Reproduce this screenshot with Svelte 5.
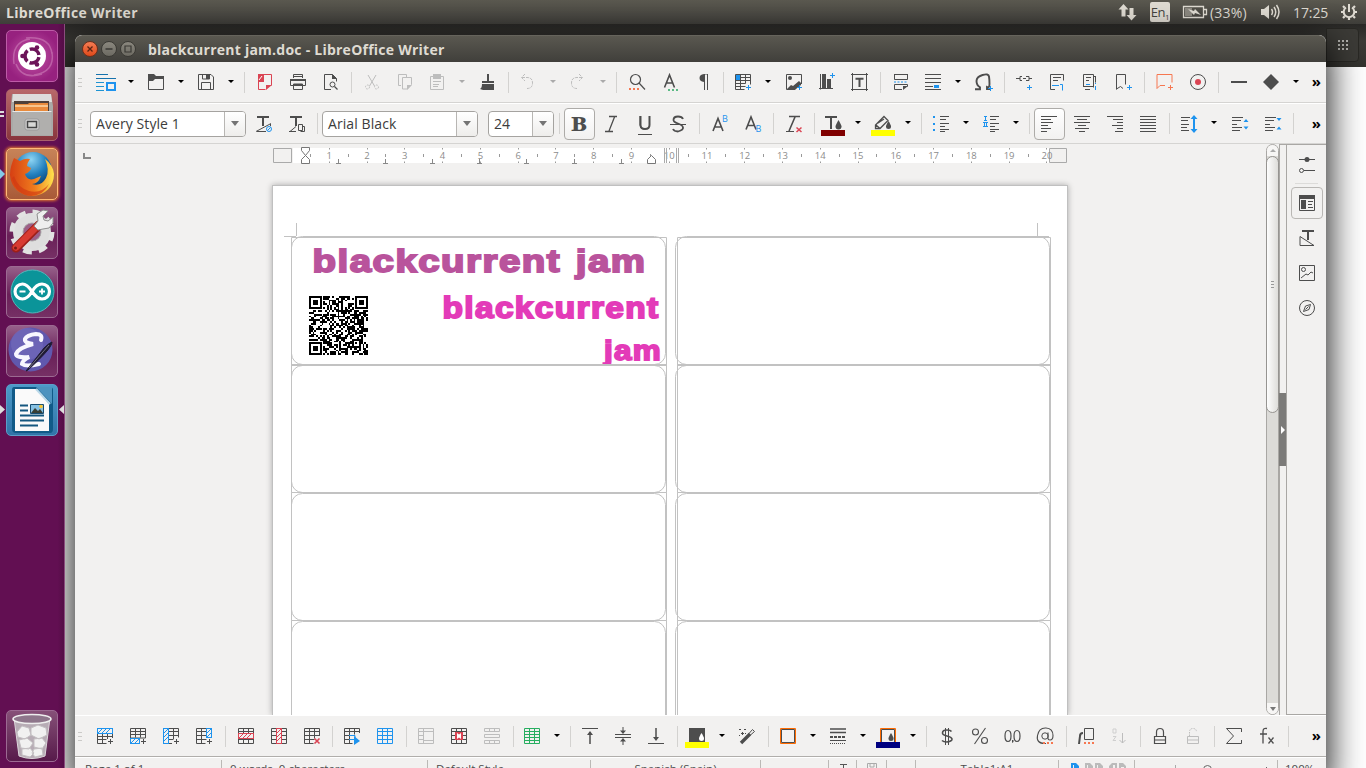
<script>
  const K = '#4d4d4d', B = '#1e93ee', R = '#da4453', O = '#f67750', G = '#bdbdbd', GR = '#27ae60';
  const s = (d, c = K, w = 1) => `<path d="${d}" fill="none" stroke="${c}" stroke-width="${w}"/>`;
  const f = (d, c = K) => `<path d="${d}" fill="${c}"/>`;
  const t = (x, y, size, str, c = K, extra = '') =>
    `<text x="${x}" y="${y}" font-size="${size}" fill="${c}" font-family="Open Sans, sans-serif" ${extra}>${str}</text>`;
  const plus = (x, y, c = B) => s(`M${x - 2.5} ${y}h5M${x} ${y - 2.5}v5`, c);
  const grid = (c = K) => s('M.5 .5h15v15h-15zM.5 3.5h15M.5 7.5h15M.5 11.5h15M5.5 .5v15M10.500 .5v15', c);
  const dots = (x, y, c = O) => f(`M${x} ${y}h2v2h-2zM${x + 4} ${y}h2v2h-2zM${x + 8} ${y}h2v2h-2z`, c);
  const hatch = (x, y, w, h, c) => {
    const out = `<rect x="${x}" y="${y}" width="${w}" height="${h}" fill="#f2f1f0" stroke="${c}"/>`;
    const n = Math.min(w, h);
    let d = '';
    if (w > h) for (let i = 0; i + n <= w; i += 4) d += `M${x + i} ${y + h}l${n} ${-n}`;
    else for (let i = 0; i + n <= h; i += 4) d += `M${x} ${y + n + i}l${n} ${-n}`;
    return out + s(d, c);
  };

  const icons = {
    new: s('M-2 .5h12M-2 4.5h20', '#1572ad') + s('M-2 8.5h8M-2 12.5h8M-2 16.5h8', '#1e93d2') + s('M9 9h8v7h-8z', B, 2),
    open: f('M0 0h6l2 2h8v3h-9l-2 2h-5z') + s('M.5 2v13.5h15v-13'),
    save: s('M.5 .5h12.5l2.5 2.5v12.5h-15zM3.5 15v-6.5h9v6.5M4.5 .5v4.500h7v-4.500') + f('M8 1h3v4h-3z'),
    pdf: s('M2.500 8v7.500h7M7 .5h8.500v11', R) + f('M2 0h6v8h-6zM10 16v-5h6z', R) + s('M3 6l3-4', '#fff'),
    print: s('M3.500 4v-3.500h9v3.500M3 2.500h10M.5 11.500v-6h15v6h-3M.5 11.500h3M3.500 10v5.500h9v-5.500z') + f('M0 5h16v2h-16zM4 10h8v2h-8z'),
    preview: s('M8 15.500h-6.500v-15h8l4 4v3') + f('M9 0v5h5z') + `<circle cx="9.500" cy="10.500" r="2.500" fill="none" stroke="${K}"/>` + s('M11.500 12.500l3 3', K, 1.300),
    cut: s('M4 1l6.500 11M12 1l-6.500 11', G) + `<g fill="none" stroke="${G}" stroke-dasharray="1.500 1.200"><circle cx="3.500" cy="13" r="2"/><circle cx="12.500" cy="13" r="2"/></g>`,
    copy: s('M4 11.500h-2.500v-11h8v3M5.500 3.500h9v7l-4 4.500h-5z', G) + f('M10 16v-5h5z', G),
    paste: s('M1.500 2.500h13v13h-13zM4 7.500h8M4 10.500h6M4 12.500h5', G) + f('M4 0h8v5h-8z', G),
    brush: f('M8 0h2v7h5v2h-12v-2h5zM3 10h12v6h-11l-3-1q2-1 2-5z'),
    undo: s('M5 0l-3.500 3.500 3.500 3.500M2 3.500h5q5.500 0 5.500 5.500t-5.500 5.500', G).replace('/>', ' stroke-dasharray="3 1"/>'),
    redo: s('M9 0l3.500 3.500-3.500 3.500M12 3.500h-5q-5.500 0-5.500 5.500t5.500 5.500', G).replace('/>', ' stroke-dasharray="3 1"/>'),
    find: `<circle cx="6.500" cy="5.500" r="5" fill="none" stroke="${K}" stroke-width="1.200"/>` + s('M10 9l6 6.500', K, 1.200) + dots(0, 14),
    spell: s('M2.500 13.500l5-12.500 5 12.500M4.500 9h6.500', K, 1.600) + dots(6, 15, '#5cba85'),
    pilcrow: f('M12 0h-3q-4.500 .5-4.500 4t4.500 4v8h1v-15.500h2v15.500h1v-16z'),
    table: s('M.5 .5h15v10M.5 .5v15h9M.5 6.500h15M.5 9.500h10M.5 12.500h10M5.500 .5v15M10.500 .5v9M5 3.500h10') + f('M1 1h4v5h-4z', B) + plus(13.500, 13.500),
    image: s('M15.500 10v-9.500h-15v15h9') + `<circle cx="4" cy="4" r="2" fill="${K}"/>` + f('M1 15l4-4 2 1 6-5 2 2v2l-5 4z') + plus(13.500, 13.500),
    chart: s('M2.500 0v15.500M1 14.500h14') + f('M4 0h4v14h-4zM9 5h4v9h-4z') + plus(14.500, 1.500),
    textbox: s('M1.500 -1v18M15.500 -1v18M0 .5h17M0 15.500h17', K) + s('M4.500 4.800h8M8.500 4v9', K, 2),
    pagebreak: s('M2.500 0v5.500h13v-5.500M2.500 .5h13M10 15.500h-7.500v-5h13v2') + s('M2 8h14', B, 1.200).replace('/>', ' stroke-dasharray="2 1.500"/>') + f('M11 16v-4h5z'),
    field: s('M0 .5h16M0 4.500h16M0 8.500h16M0 12.500h8M0 15.500h16') + f('M9 11h5v3h-5z', B),
    omega: s('M0 15.200h5v-2q-3.500-2-3.500-6.200t6-6 6.500 1.500 .5 7.500-2.500 3v2h3', K, 1.900) + plus(15.500, 14.500),
    link: s('M0 4.500h4M6 2.500h-2v4h2M7 4.500h3M10 2.500h3v4h-3M13 4.500h3') + plus(13.500, 13.500),
    footnote: s('M6 15.500h-4.500v-15h13v6M4 3.500h8M4 6.500h5') + s('M3 11.500h7', B) + s('M11 10.500h2.500v6', B),
    endnote: s('M1.500 12.500v-12h10v13M1 12.500h10M13.500 2.500v6M3 15.500h5M4 3.500h5M4 6.500h3M11 2.500h3') + s('M4 10.500h4', B) + s('M13.500 9v1M13.500 12v4', B),
    bookmark: s('M1.500 15.500v-15h9v10M1.500 15l4-2.500 2.500 2') + plus(14.500, 13.500),
    comment: s('M9 11.500h-5l-3 3v-14h15v8', O) + plus(14.500, 13.500, O),
    record: `<circle cx="8" cy="8" r="7.500" fill="none" stroke="${K}"/><circle cx="8" cy="8" r="3" fill="${R}"/>`,
    line: s('M0 8h16', K, 1.800),
    diamond: f('M8 0l8 8-8 8-8-8z'),
    updstyle: s('M1 1h12M7 0v10', K, 2) + s('M0 15.500l15-8M1 15.500h9M14.500 8v2') + `<circle cx="13" cy="13" r="2.500" fill="none" stroke="${B}"/>` + s('M11.500 14.500l3-3', B),
    newstyle: s('M1 1h12M7 0v10', K, 2) + s('M0 15.500h7M1 15.500l6-5M9.500 8.500h4v6h-4zM14 10.500h1.500v5h-4'),
    bold: t(0, 15, 20, 'B', K, 'font-weight="800" style="font-family:Noto Serif,DejaVu Serif;font-size:20px" textLength="16" lengthAdjust="spacingAndGlyphs"'),
    italic: s('M5 .5h8M1 15.500h8M10.500 1l-5.500 14', K, 1.300),
    underline: s('M3.500 0v9q0 4 4.500 4t4.500-4v-9', K, 2) + s('M3 0v9q0 4 4 4') + s('M1 18.500h14'),
    strike: s('M13 3q-1-2.500-5-2.500-4.500 0-4.500 3.500 0 2 4.500 3.500t5 4-5 4q-4 0-5-2.500', K, 1.800) + s('M0 8.500h16'),
    sup: s('M1 15l5-12.500 5 12.500M3 11h6', K, 1.600) + t(10, 6, 9, 'B', B),
    sub: s('M1 13.500l5-12.500 5 12.500M3 9.500h6', K, 1.600) + t(10.5, 16, 9, 'B', B),
    clear: s('M3 .5h11M9 1l-6 14', K, 1.600) + s('M0 15.500h8') + s('M10.500 11.500l5 4.500M15.500 11.500l-5 4.500', R, 1.500),
    fontcolor: s('M0 1h12M6 0v13', K, 2) + f('M13.500 4q-3 5-3 6.500a3 3 0 0 0 6 0q0-1.500-3-6.500z') + f('M-4 14h24v6h-24z', '#800000'),
    highlight: s('M9 .5l4 4-8 8h-4.500v-3.500zM1 9l4 3.500M3 7l6-4', K, 1.300) + f('M13.500 5q-2.500 4-2.500 5.500a2.500 2.500 0 0 0 5 0q0-1.500-2.500-5.500z') + f('M-4 14h24v6h-24z', '#ffff00'),
    bullets: f('M0 0h2v2h-2zM0 7h2v2h-2zM0 13h2v2h-2z', B) + s('M7 .5h9M7 3.500h6M7 7.500h9M7 10.500h5M7 13.500h9M7 15.500h5'),
    numbers: s('M1 .5h3M2.500 .5v4M1 4.500h3M0 6.500h5M1.500 6.500v4M3.500 6.500v4M0 10.500h5', B) + s('M7 .5h9M7 3.500h6M7 7.500h9M7 10.500h5M7 13.500h9M7 15.500h5'),
    left: s('M0 .5h16M0 3.500h10M0 6.500h12M0 9.500h7M0 12.500h10M0 15.500h6'),
    center: s('M0 .5h16M3 3.500h10M0 6.500h16M4 9.500h8M1 12.500h14M5 15.500h6'),
    right: s('M0 .5h16M6 3.500h10M10 6.500h6M5 9.500h11M10 12.500h6M8 15.500h8'),
    justify: s('M0 .5h16M0 3.500h16M0 6.500h16M0 9.500h16M0 12.500h16M0 15.500h16'),
    spacing: s('M0 1.500h9M0 4.500h7M0 8.500h8M0 11.500h6M0 14.500h8') + s('M13 2v12', B, 2) + f('M13-1l3.500 4h-7zM13 17l3.500-4h-7z', B),
    incpara: s('M0 1.500h11M0 4.500h9M0 11.500h10M0 14.500h8M0 8.500h5') + f('M14 3l2.500 3h-5zM14 13.500l2.500-3h-5z', B),
    decpara: s('M0 1.500h11M0 4.500h9M0 11.500h10M0 14.500h8M0 8.500h5') + f('M14 5l2.500-3h-5zM14 10.500l2.500 3h-5z', B),
    rowabove: s('M.5 5v10.500h9M.5 8.500h15M.5 11.500h9M5.500 5v10.500M10.500 5v6M15.500 5v5') + hatch(0.5, 0.5, 15, 5, B) + plus(13.500, 13.500, K),
    rowbelow: s('M.5 .5h15v9.500h-15zM.5 3.500h15M.5 6.500h15M5.500 .5v9M10.500 .5v9') + hatch(0.5, 10.5, 9, 5, B) + plus(13.500, 13.500, K),
    colbefore: s('M5 .5h10.500v9M5 3.500h10M5 7.500h10M5 11.500h5M5 15.500h4M10.500 .5v11') + hatch(0.5, 0.5, 5, 15, B) + plus(13.500, 13.500, K),
    colafter: s('M10 .5h-9.500v15h9M.5 3.500h10M.5 7.500h10M.5 11.500h10M5.500 .5v15') + hatch(10.5, 0.5, 5, 9, B) + plus(13.500, 13.500, K),
    delrow: grid() + hatch(0.5, 5.5, 15, 5, R),
    delcol: grid() + hatch(5.5, 0.5, 5, 15, R),
    deltable: s('M15.500 8v-7.500h-15v15h9M.5 3.500h15M.5 7.500h15M.5 11.500h10M5.500 .5v15M10.500 .5v10') + s('M10.500 10.500l5 5M15.500 10.500l-5 5', R, 1.600),
    selcell: s('M15.500 5v-4.500h-15v15h8M.5 3.500h15M.5 7.500h5M.5 11.500h8M5.500 .5v15M10.500 .5v6') + s('M5 7.500h6v4h-6', B) + f('M10 8l6 5-6 4z', B),
    seltable: grid(B),
    merge: s('M.5 .5h15v15h-15zM5.500 .5v15M.5 3.500h15M.5 11.500h5M.5 7.500h5M5 12.500h10', G),
    split: grid() + `<rect x="4" y="4" width="8" height="8" fill="${R}"/>` + f('M6 5l2 1.500 2-1.500v6l-2-1.500-2 1.500z', '#fff'),
    splittable: s('M.5 3.500v-3h15v3zM.5 12.500h15v3h-15zM5.500 .5v3M10.500 .5v3M5.500 12.500v3M10.500 12.500v3M.5 6.500h15v3h-15z', G),
    autofmt: s('M.5 .5h15v15h-15zM.5 3.500h15M.5 6.500h15M.5 9.500h15M.5 12.500h15M5.500 .5v15M10.500 .5v15', GR),
    top: s('M0 .5h16') + s('M8 4v12', K, 1.500) + f('M8 3l3 4h-6z'),
    middle: s('M0 6.500h16M0 9.500h16M8 -1v5M8 12v5', K) + f('M8 6l3-3.500h-6zM8 10l3 3.500h-6z'),
    bottom: s('M0 15.500h16') + s('M8 0v11', K, 1.500) + f('M8 13l3-4h-6z'),
    cellbg: f('M0 0h16v14h-16z') + f('M12.500 5q-2.500 4-2.500 5.500a2.500 2.500 0 0 0 5 0q0-1.500-2.500-5.500z', '#fff') + f('M-4 14h24v6h-24z', '#ffff00'),
    wand: s('M2 15l9-9', K, 3.4) + s('M10 5.500l3.500-4 2 2-4 3.500z') + s('M0 1.500h2M5 1.500h2M2 5.500h3M3.500 4v3M0 7.500h1M6 5.500h1'),
    borders: s('M.5 .5h15v15h-15z', '#ff6a00') + s('M1.500 1.500h13v13h-13z'),
    bstyle: s('M0 1h16M0 4.500h16', K, 1.600) + s('M0 9h16', K, 2).replace('/>', ' stroke-dasharray="3 1"/>') + s('M0 12.500h16') + s('M0 15.500h16').replace('/>', ' stroke-dasharray="1 1"/>'),
    bcolor: s('M.5 .5h15v15h-15z', '#ff6a00') + s('M1.500 14v-12.500h13v12.500') + f('M11 5q-2.500 4-2.500 5.500a2.500 2.500 0 0 0 5 0q0-1.500-2.500-5.500z') + f('M-4 14h24v6h-24z', '#000080'),
    dollar: s('M12.500 3.500q-1-1.500-4.500-1.500-4.500 0-4.500 3 0 2 4.500 3t5 3-5 3q-3.500 0-5-1.500', K, 1.600) + s('M6.500 0v17M9.500 0v17'),
    percent: `<g fill="none" stroke="${K}" stroke-width="1.100"><circle cx="3.500" cy="4" r="3"/><circle cx="12.500" cy="12.500" r="3"/></g>` + s('M13.500 0l-11 16', K, 1.100),
    number: s('M1 8q0-5.500 3-5.500t3 5.500-3 5.500-3-5.500zM10 8q0-5.500 3-5.500t3 5.500-3 5.500-3-5.500z', K, 1.200) + f('M8 12h1.500v2l-1.500 1z'),
    at: s('M11 4.500v6q0 1.500 2 1.500 3 0 3-4.500 0-7-7-7.500t-8.500 7.500 7.500 8h1', K, 1.100) + `<circle cx="8" cy="8" r="3.200" fill="none" stroke="${K}"/>` + dots(6, 14),
    caption: s('M6.500 .5h9v11h-9z') + s('M5 5q-3 0-3 3l-1 8', K, 2) + dots(6, 14),
    sort: s('M2 1h3v4h-3zM2 8.500h3l-3 4h3', '#cfcfcf') + s('M11.500 5v10M8.500 12l3 3 3-3', G),
    lock: s('M2.500 8.500h11v7h-11zM2 12h12M4.500 8v-4q0-3.500 3.500-3.500t3.500 3.500v4', K, 1.200),
    unlock: s('M2.500 8.500h11v7h-11zM2 12h12', G) + s('M4.500 8v-4q0-3.500 3.500-3.500t3.500 3.500', G).replace('/>', ' stroke-dasharray="1.500 1"/>'),
    sum: s('M15.500 4v-3.500h-15l7 7.500-7 7.500h15v-3.500'),
    fx: s('M8 .5q-4-1-4 3v12M1 6h7', K, 1.300) + s('M9.500 9.500l5 6M14.500 9.500l-5 6', K, 1.300),
    props: s('M0 2.500h16M5 13.500h11') + `<circle cx="8" cy="2.500" r="2.500" fill="${K}"/><circle cx="2.500" cy="13.500" r="2" fill="none" stroke="${K}"/>`,
    panel: s('M.5 .5h15v15h-15zM9 6.500h5M9 9.500h4M9 12.500h5') + f('M0 0h16v4h-16zM2 5h5v9h-5z'),
    styles: s('M3 1h12M9 0v10', K, 2) + s('M1 6.500v9h14zM1 15.500h14'),
    gallery: s('M.5 .5h15v15h-15zM2 13l5-4 2 1 3-3 2 1') + `<circle cx="4.500" cy="4.500" r="2" fill="none" stroke="${K}"/>`,
    compass: `<circle cx="8" cy="8" r="7.500" fill="none" stroke="${K}"/>` + s('M11.500 4.500l-1.500 5-5.500 2 2-5.500zM6.500 9.500l3-3', K)
  };

  const nudged = new Set('print preview cut copy find spell pilcrow image record line updstyle newstyle sup sub clear incpara decpara dollar percent delrow delcol deltable'.split(' '));

  const parse = (str) => str.trim().split(/\s+/);
  const standard = parse('new v open v save v | pdf print preview | cut copy paste x brush | undo x redo x | find spell pilcrow | table v image chart textbox | pagebreak field v omega | link footnote endnote bookmark | comment record | line diamond v');
  const formatting = parse('bold* italic underline strike | sup sub | clear / fontcolor v highlight v | bullets v numbers v | left* center right justify | spacing v incpara decpara |');
  const tableBar = parse('rowabove rowbelow colbefore colafter | delrow delcol deltable | selcell seltable | merge split splittable / autofmt v | top middle bottom | cellbg v wand | borders v bstyle v bcolor v | dollar percent number at | caption sort | lock unlock | sum fx |');

  const numerals = Array.from({ length: 20 }, (_, i) => i + 1);
  const tabs = Array.from({ length: 7 }, (_, i) => 64.5 + i * 47.2);
  const rows = [0, 1, 2, 3];

  const N = 33;
  let seed = 1913;
  const rnd = () => ((seed = (seed * 1103515245 + 12345) % 2147483648) / 2147483648);
  const finder = (x, y) => {
    const m = Math.max(Math.abs(x - 3), Math.abs(y - 3));
    return m === 3 || m < 2;
  };
  const modules = [];
  for (let y = 0; y < N; y++)
    for (let x = 0; x < N; x++) {
      let on = rnd() > 0.49;
      if (x < 8 && y < 8) on = x < 7 && y < 7 && finder(x, y);
      else if (x > 24 && y < 8) on = x > 25 && y < 7 && finder(x - 26, y);
      else if (x < 8 && y > 24) on = x < 7 && y > 25 && finder(x, y - 26);
      else if (Math.abs(x - 26) < 3 && Math.abs(y - 26) < 3) on = Math.max(Math.abs(x - 26), Math.abs(y - 26)) !== 1;
      else if (x === 6) on = y % 2 === 0;
      else if (y === 6) on = x % 2 === 0;
      if (on) modules.push(`M${x} ${y}h1v1h-1z`);
    }
  const qr = modules.join('');
</script>

{#snippet icon(name)}
  <svg class="icon" viewBox="-4 -4 24 24">{@html icons[name]}</svg>
{/snippet}

{#snippet items(list)}
  {#each list as it}
    {#if it === '|'}<i class="sep"></i>
    {:else if it === '/'}<i class="sep narrow"></i>
    {:else if it === 'v' || it === 'x'}<i class="drop" class:off={it === 'x'}></i>
    {:else}<span class="btn" class:on={it.endsWith('*')} class:nudge={nudged.has(it)}>{@render icon(it.replace('*', ''))}</span>{/if}
  {/each}
{/snippet}

{#snippet combo(text, w)}
  <div class="combo" style="width:{w}px"><span>{text}</span><b></b></div>
{/snippet}

<div class="screen">
  <header class="panel">
    <span class="app">LibreOffice Writer</span>
    <div class="tray">
      <svg width="20" height="18" viewBox="0 0 20 18" fill="#dfdbd2"><path d="M5.500 1l5 5.500h-3v7h-4v-7h-3z M13.500 17.500l5-5.500h-3v-7h-4v7h-3z"/></svg>
      <span class="lang">En<sub>1</sub></span>
      <svg class="batt" width="26" height="14" viewBox="0 0 26 14"><path d="M1.500 1.500h20v11h-20zM22 4.500h2.500v5h-2.500" fill="none" stroke="#dfdbd2" stroke-width="1.300"/><path d="M3 3h7v8h-7z" fill="#8b8880"/><path d="M6 4l6 2 1-2 6 6-6-2-1 2z" fill="#dfdbd2"/></svg>
      <span class="pct">(33%)</span>
      <svg class="vol" width="22" height="18" viewBox="0 0 22 18"><path d="M1 6h3l5-4v14l-5-4h-3z" fill="#dfdbd2"/><path d="M11.500 6q2 3 0 6M14 4q3.500 5 0 10M16.500 2q5 7 0 14" fill="none" stroke="#dfdbd2" stroke-width="1.500"/></svg>
      <span class="clock">17:25</span>
      <svg class="gear" width="18" height="18" viewBox="0 0 18 18" fill="none" stroke="#dfdbd2"><path d="M6 4.500a5.300 5.300 0 1 0 6 0" stroke-width="2"/><path d="M9 1v8" stroke-width="2"/><path d="M1 9h2M15 9h2M3 3l1.700 1.700M15 3l-1.700 1.700M3 15l1.700-1.700M15 15l-1.700-1.700M9 15v2" stroke-width="2.200"/></svg>
    </div>
  </header>

  <div class="below">
    <nav class="launcher">
      <div class="tile dash">
        <svg viewBox="0 0 52 52"><path d="M8 34q-3-22 16-25M20 8q24-2 26 16M46 22q3 20-18 23M36 44q-20 6-26-10" fill="none" stroke="#c774b2" stroke-width="1.500" opacity=".7"/><circle cx="26" cy="26" r="14" fill="#fff"/><circle cx="26" cy="26" r="7" fill="none" stroke="#6c1459" stroke-width="3.500" stroke-dasharray="12.200 2.460" stroke-dashoffset="-1.200"/><circle cx="16.500" cy="26" r="2.300" fill="#6c1459"/><circle cx="31" cy="17.500" r="2.300" fill="#6c1459"/><circle cx="31" cy="34.500" r="2.300" fill="#6c1459"/></svg>
      </div>
      <div class="tile files">
        <svg viewBox="0 0 52 52"><path d="M6 5h39l2 12v30h-42v-30z" fill="#aaa9a7"/><path d="M7 5h38l1 8h-40z" fill="#dedddc"/><path d="M8 12h35v11h-35z" fill="#4e4039"/><path d="M9 15h13l1-1h19v9h-33z" fill="#e98b3c"/><path d="M9 17h33" stroke="#fbd9a8" stroke-width="1.500"/><path d="M7 22h38v24h-38z" fill="#b0afad"/><path d="M6.500 22.500h39" stroke="#e8e8e7"/><rect x="19" y="30" width="14" height="11" rx="2" fill="#d6d5d4" stroke="#999"/><path d="M21.500 32.500h9v6h-9z" fill="#d8d8d6" stroke="#444" stroke-width="1.500"/></svg>
      </div>
      <div class="tile fox">
        <svg viewBox="0 0 52 52"><defs><radialGradient id="globe" cx=".45" cy=".2" r=".8"><stop offset="0" stop-color="#8ed5f4"/><stop offset=".5" stop-color="#217fbd"/><stop offset="1" stop-color="#07305f"/></radialGradient><linearGradient id="tail"><stop offset="0" stop-color="#d63f13"/><stop offset=".55" stop-color="#ef7b1d"/><stop offset="1" stop-color="#ffe44d"/></linearGradient></defs><circle cx="27" cy="23" r="19" fill="url(#globe)"/><path d="M8 10l6 3q5-3 10-2-3 4-3 7l4 2q-1 4-6 6 2 7 9 5l7-3q-3 8-9 8 9 3 14-6 4-8-1-19 8 6 9 15c0 13-9 21-21 22C14 48 5 40 4 27c0-7 2-12 4-17z" fill="url(#tail)"/><path d="M8 28q4 12 15 15 12 3 20-7-5 11-18 12Q10 47 6 30z" fill="#cf3713" opacity=".65"/></svg>
      </div>
      <div class="tile">
        <svg viewBox="0 0 52 52"><circle cx="26" cy="25" r="14" fill="none" stroke="#dedede" stroke-width="10"/><circle cx="26" cy="25" r="20" fill="none" stroke="#e2e2e2" stroke-width="5" stroke-dasharray="8.700 7"/><circle cx="26" cy="25" r="9" fill="#9c6088" stroke="#aaa"/><path d="M10 41l23-23" stroke="#9e1f18" stroke-width="9" stroke-linecap="round"/><path d="M10 40.500l23-23" stroke="#d83b31" stroke-width="6.500" stroke-linecap="round"/><path d="M32 23l-4-4 4-5-1-7 6-4 5 1-5 5 1 4 4 1 5-4v6l-4 5-6 1z" fill="#eee" stroke="#8f8f8f"/><circle cx="9.500" cy="41" r="1.500" fill="#7a1a15"/></svg>
      </div>
      <div class="tile">
        <svg viewBox="0 0 52 52"><circle cx="26.500" cy="25.500" r="21.500" fill="#0b9499" stroke="#4fb9bb"/><path d="M26 25.500c-4-6-7-7.500-9.500-7.500a7.500 7.500 0 0 0 0 15c3 0 6-1.500 9.500-7.500s7-7.500 10-7.500a7.500 7.500 0 0 1 0 15c-3 0-6-1.500-10-7.500z" fill="none" stroke="#fff" stroke-width="3.200"/><path d="M13.500 25.500h6M33 25.500h6M36 22.500v6" stroke="#fff" stroke-width="1.800"/></svg>
      </div>
      <div class="tile">
        <svg viewBox="0 0 52 52"><circle cx="24.500" cy="24.500" r="22" fill="#6058ae"/><circle cx="21" cy="19" r="16" fill="#837bc6" opacity=".35"/><path d="M35 15q2-6-5-6-9 1-11 5-1 4 8 5-15 4-17 10 0 4 13 3-7 4-7 7 4 3 17 0" fill="none" stroke="#f7f6ff" stroke-width="4" stroke-linecap="round"/><path d="M46 17q-3 1-8 6L20 46l2-1q12-11 19-19 5-6 5-9z" fill="#1f1b34" stroke="#1f1b34"/><path d="M43 20l-20 23" stroke="#737082"/></svg>
      </div>
      <div class="tile writer">
        <svg viewBox="0 0 52 52"><path d="M8 3h36q3 0 3 3v39q0 4-3 4h-34q-4 0-4-4v-39q0-3 2-3z" fill="#115a87"/><path d="M9 5h22l12 15v27h-34z" fill="#fafafa"/><path d="M30 3h16v17z" fill="#4c93bf"/><path d="M30 5l14 15" stroke="#bad9e9" stroke-width="2"/><path d="M14 21.500h8M14 26.500h8M14 31.500h24M14 36.500h24M14 41.500h18" stroke="#15577f" stroke-width="2.200"/><path d="M24.500 20.500h13v9h-13z" fill="#86c1e3" stroke="#174c70"/><path d="M25 29l4-5 3 3 2-2 3 4z" fill="#383f35"/><circle cx="35" cy="22.500" r="1.800" fill="#f8c532"/></svg>
      </div>
      <div class="tile bin">
        <svg viewBox="0 0 52 52"><path d="M8 8h36l-5 38q-13 5-26 0z" fill="#b7acb5" stroke="#dcd6db"/><g fill="#f1f1f1" stroke="#c3bfc2"><path d="M11 22l5-6 7 2 2 7-6 4-7-2zM25 18l7-3 8 3 1 7-8 4-8-4zM13 30l8-2 6 5-4 6-8-1zM28 29l8-1 4 5-4 6-8-2zM16 39l8-1 4 5-4 4-8-2zM28 39l8-1 1 7-8 2-3-4z"/></g><ellipse cx="26" cy="9" rx="19" ry="4.500" fill="#8e768b" stroke="#eee" stroke-width="1.600"/></svg>
      </div>
      <svg class="pips" width="65" height="744" viewBox="0 24 65 744"><path d="M0 111h4v2h-4zM0 115h4v2h-4z" fill="#ddd"/><path d="M0 169l5 5-5 5z" fill="#83cbe8"/><path d="M0 405l5 4.500-5 4.500zM64 405l-5 4.500 5 4.500z" fill="#ddd"/></svg>
    </nav>

    <div class="desktop">
      <div class="browser"><div class="chrome"><div class="menu">
        <svg width="12" height="12" viewBox="0 0 12 12" fill="#b5b4b0"><path d="M1 1h2v2h-2zM5 1h2v2h-2zM9 1h2v2h-2zM1 5h2v2h-2zM5 5h2v2h-2zM9 5h2v2h-2zM1 9h2v2h-2zM5 9h2v2h-2zM9 9h2v2h-2z"/></svg>
      </div></div></div>

      <main class="window">
        <div class="title">
          <i class="wb close"><svg viewBox="0 0 16 16"><path d="M5.500 5.500l5 5M10.500 5.500l-5 5" stroke="#5a2414" stroke-width="1.300"/></svg></i>
          <i class="wb"><svg viewBox="0 0 16 16"><path d="M4.500 8h7" stroke="#3a3935" stroke-width="1.300"/></svg></i>
          <i class="wb"><svg viewBox="0 0 16 16"><path d="M5 5h6v6h-6z" fill="none" stroke="#3a3935" stroke-width="1.200"/></svg></i>
          <span>blackcurrent jam.doc - LibreOffice Writer</span>
        </div>

        <div class="bar std"><i class="grip"></i>{@render items(standard)}<span class="more">»</span></div>
        <div class="bar fmt">
          <i class="grip"></i>
          {@render combo('Avery Style 1', 156)}
          {@render items(['updstyle', 'newstyle', '|'])}
          {@render combo('Arial Black', 156)}
          <div class="size">{@render combo('24', 66)}</div>
          {@render items(['|', ...formatting])}<span class="more">»</span>
        </div>

        <div class="work">
          <div class="canvas">
            <div class="rulerrow">
              <svg class="corner" width="8" height="7"><path d="M1 0v6M0 5h8" stroke="#888" stroke-width="2" fill="none"/></svg>
              <svg class="ruler" width="800" height="20" viewBox="0 -1 800 20">
                <path d="M20 0h758v15h-758z" fill="#fff"/>
                <path d="M.5 .5h18v14h-18zM776.500 .5h17v14h-17z" fill="#f2f1f0" stroke="#aaa"/>
                {#each numerals as n}
                  <path d="M{Math.round(18 + n * 37.77)}.5 0v1.500M{Math.round(18 + n * 37.77)}.5 13.500v1.500M{Math.round(18 + (n - .5) * 37.77)}.5 6v3" stroke="#999"/>
                  <text x={18.500 + n * 37.77} y="11">{n}</text>
                {/each}
                {#each tabs as x}<path d="M{Math.round(x) - 2} 15.500h5M{Math.round(x)}.5 15v-4" stroke="#888"/>{/each}
                <path d="M28.500 -.5h8v3l-4 5 4 4v4h-8v-4l4-4-4-5z" fill="#fff" stroke="#777"/>
                <path d="M374.500 15.500v-4l4-4 4 4v4z" fill="#fff" stroke="#777"/>
                <path d="M391.500 0v15M393.500 0v15M403.500 0v15M405.500 0v15" stroke="#aaa"/>
              </svg>
            </div>
            <div class="paper">
              <svg width="794" height="532" viewBox="273 186 794 532">
                <g fill="none" stroke="#c2c2c2">
                  <path d="M284 236.500h12M296.500 223v13M1037.500 223v13M1038 236.500h11"/>
                  {#each rows as r}
                    <path d="M291.500 {237.5 + r * 128 - (r ? 1 : 0)}h375v128h-375zM677.500 {237.5 + r * 128 - (r ? 1 : 0)}h373v128h-373z"/>
                    <rect x="291.500" y={236.5 + r * 128 + (r ? 1 : 0)} width="374" height={r ? 127 : 128} rx="11"/>
                    <rect x="675.500" y={236.5 + r * 128 + (r ? 1 : 0)} width="374" height={r ? 127 : 128} rx="11"/>
                  {/each}
                </g>
                <g class="jam">
                  <text x="312.500" y="272" textLength="334" lengthAdjust="spacingAndGlyphs" fill="#b9539c" stroke="#b9539c" font-size="31">blackcurrent jam</text>
                  <text x="442.500" y="318.300" textLength="217" lengthAdjust="spacingAndGlyphs" fill="#e33bb8" stroke="#e33bb8" font-size="29.500">blackcurrent</text>
                  <svg x="590" y="325" width="75" height="39" viewBox="590 325 75 39"><text x="604" y="360" textLength="58" lengthAdjust="spacingAndGlyphs" fill="#e33bb8" stroke="#e33bb8" font-size="28.500">jam</text></svg>
                </g>
                <svg x="309" y="296" width="59" height="59" viewBox="0 0 33 33" shape-rendering="crispEdges"><path d={qr}/></svg>
              </svg>
            </div>
          </div>
          <div class="scroll"><i class="up"></i><div class="thumb"><i></i></div><i class="down"></i></div>
          <div class="splitter"><i></i></div>
          <aside>
            {@render icon('props')}<hr />
            <span class="deck">{@render icon('panel')}</span>
            {@render icon('styles')}{@render icon('gallery')}{@render icon('compass')}
          </aside>
        </div>

        <div class="bar tbl"><i class="grip"></i>{@render items(tableBar)}<span class="more">»</span></div>
        <footer>
          <span>Page 1 of 1</span><span>0 words, 0 characters</span><span>Default Style</span><span class="mid">Spanish (Spain)</span><span></span>
          <span class="ic"><svg width="10" height="9"><path d="M1 1.500h7M4.500 1v8" stroke="#555" fill="none"/></svg></span>
          <span class="ic"><svg width="10" height="9"><path d="M.5 9v-8.500h9v8.500M3 0v4h4v-4" stroke="#aaa" fill="none"/></svg></span>
          <span></span><span class="mid">Table1:A1</span>
          <span class="ic views"><svg width="56" height="9"><path d="M1 9v-9h5l3 3v6h-2v-4h-3v-3h-1v7z" fill="#1e93ee"/><path d="M15 9v-9h5l3 3v6h-2v-4h-3v-3h-1v7zM25 9v-9h5l3 3v6h-2v-4h-3v-3h-1v7zM39 9v-6l3-3h5v9h-2v-7h-2v7zM49 9v-9h4l3 3v6h-2v-5h-3v5z" fill="#bbb"/></svg></span>
          <span class="ic"><svg width="130" height="9" fill="none" stroke="#666"><path d="M30.500 2v7" stroke="#aaa"/><path d="M58.500 6.500q0-4 4-4t4 4v3M121.500 4v5"/></svg></span>
          <span>100%</span>
        </footer>
      </main>
    </div>
  </div>
</div>

<style>
  :global(body) { margin: 0; overflow: hidden; background: #fff; }
  .screen { width: 1366px; height: 768px; overflow: hidden; display: flex; flex-direction: column; font-family: 'Open Sans', 'Noto Sans', sans-serif; color: #4c4c4c; }
  .screen :global(*) { box-sizing: border-box; }
  svg { display: block; flex: none; }
  .panel { height: 24px; flex: none; display: flex; justify-content: space-between; align-items: center; background: linear-gradient(#5b5950, #3f3e3a); color: #dfdbd2; }
  .app { padding-left: 6px; font-size: 14px; font-weight: 700; letter-spacing: .33px; }
  .tray { display: flex; align-items: center; font-size: 14px; padding-right: 8px; }
  .lang { margin-left: 12px; width: 20px; height: 20px; border-radius: 2px; background: #dfdbd2; color: #45443f; display: flex; align-items: center; justify-content: center; font-size: 13px; letter-spacing: -.5px; }
  .lang sub { font-size: 8px; align-self: flex-end; }
  .batt { margin-left: 12px; }
  .pct { margin-left: 2px; width: 39px; white-space: nowrap; letter-spacing: .2px; }
  .vol { margin-left: 11px; }
  .clock { margin-left: 11px; width: 37px; white-space: nowrap; letter-spacing: -.1px; }
  .gear { margin-left: 10px; }
  .below { flex: 1; min-height: 0; display: flex; }
  .launcher { width: 65px; flex: none; position: relative; display: flex; flex-direction: column; gap: 7px; padding: 6px 0 6px 6px; background: linear-gradient(90deg, #620f52 90%, #540d46); border-right: 1px solid #8b4c7e; }
  .tile { width: 52px; height: 52px; border-radius: 5px; background: linear-gradient(#96608a, #6a2058 55%, #763065); border: 1px solid #9c6a92; }
  .tile svg { width: 52px; height: 52px; margin: -1px; }
  .dash { background: radial-gradient(#c456a8, #97217f 75%); border-color: #bd5ba7; }
  .files { background: linear-gradient(#b8686a, #88353d); border-color: #a9606a; }
  .fox { background: linear-gradient(#c78358, #a85a38); border-color: #ffba77; box-shadow: 0 0 3px 1px #e2762d; }
  .writer { background: linear-gradient(#4c9ac9, #3174a8); border-color: #5c9dc8; }
  .bin { margin-top: auto; background: linear-gradient(#865078, #571a4a); }
  .pips { position: absolute; left: 0; top: 0; }
  .desktop { flex: 1; min-width: 0; display: grid; grid-template-rows: 744px; }
  .desktop > * { grid-area: 1 / 1; }
  .browser { background: #fff; overflow: hidden; }
  .chrome { height: 43px; background: linear-gradient(#292826, #3c3b37 40%, #33322e); display: flex; justify-content: flex-end; padding: 4px 7px 5px 0; }
  .menu { width: 33px; border: 1px solid #292824; border-radius: 0 4px 4px 0; background: #3c3b37; display: flex; align-items: center; justify-content: center; }
  .window { margin: 11px 0 0 10px; width: 1251px; height: 742px; display: flex; flex-direction: column; background: #f2f1f0; border-radius: 7px 7px 0 0; overflow: clip; box-shadow: 0 10px 34px 4px rgba(0, 0, 0, .85); }
  .title { height: 27px; flex: none; display: flex; align-items: center; background: linear-gradient(#5a5850, #403f3b); border-top: 1px solid #66645c; color: #dfdbd2; font-weight: 700; font-size: 14px; padding-left: 7px; gap: 3px; border-radius: 7px 7px 0 0; }
  .title span { margin-left: 9px; letter-spacing: .24px; }
  .wb { width: 16px; height: 16px; border-radius: 50%; background: linear-gradient(#8a877e, #6c6a62); border: 1px solid #3b3a35; }
  .wb svg { width: 16px; height: 16px; margin: -1px; }
  .close { background: linear-gradient(#f47c54, #df4a1a); border-color: #6e2f1c; }
  .bar { flex: none; display: flex; align-items: center; background: #f2f1f0; }
  .std { height: 41px; border-bottom: 1px solid #d5d4d2; }
  .fmt { height: 41px; border-top: 1px solid #fff; border-bottom: 1px solid #d5d4d2; }
  .tbl { height: 42px; border-top: 1px solid #fff; border-bottom: 1px solid #b0aeab; }
  .grip { width: 4px; height: 9px; margin: 0 8px 0 3px; background: repeating-linear-gradient(#cbcac8 0 1px, transparent 1px 4px); flex: none; }
  .tbl .grip { margin-right: 7px; }
  .btn { width: 33px; height: 32px; flex: none; display: flex; align-items: center; padding-left: 4px; }
  .btn.nudge { padding-left: 5px; }
  .btn.on { width: 31px; margin: 0 1px; padding-left: 3px; border: 1px solid #adaba8; border-radius: 4px; background: linear-gradient(#fff, #f2f1f0); }
  .btn.on .icon { margin-left: -1px; }
  .icon { width: 24px; height: 24px; overflow: visible; flex: none; }
  .drop { width: 17px; height: 5px; flex: none; display: flex; justify-content: center; }
  .drop::before { content: ''; border: 3px solid transparent; border-top-color: #000; border-bottom: 0; margin: 0 1px 0 0; }
  .drop.off::before { border-top-color: #aaa; }
  .sep { width: 8px; height: 21px; flex: none; border-left: 1px solid #d3d2d0; transform: translateX(4px); }
  .sep.narrow { width: 7px; }
  .more { margin: 0 5px 2px auto; font-size: 15px; line-height: 20px; color: #000; font-weight: 700; }
  .combo { height: 26px; flex: none; display: flex; border: 1px solid #a5a3a0; border-radius: 4px; background: #fff; font-size: 14px; color: #3c3c3c; line-height: 23px; }
  .combo span { flex: 1; padding-left: 5px; letter-spacing: .08px; white-space: nowrap; }
  .combo b { width: 21px; border-left: 1px solid #b8b6b3; border-radius: 0 3px 3px 0; background: linear-gradient(#fff, #eeedeb); display: flex; align-items: center; justify-content: center; }
  .combo b::before { content: ''; border: 4px solid transparent; border-top: 5px solid #747474; border-bottom: 0; }
  .fmt .combo + .btn { margin-left: 1px; }
  .fmt .sep + .combo { margin-left: 1px; }
  .size { margin: 0 1px 0 10px; }
  .work { flex: 1; min-height: 0; display: flex; }
  .canvas { flex: 1; min-width: 0; overflow: hidden; display: flex; flex-direction: column; }
  .rulerrow { height: 41px; flex: none; display: flex; padding: 3px 0 0 8px; }
  .corner { margin-top: 6px; }
  .ruler { margin-left: 182px; overflow: visible; }
  .ruler text { font-size: 9.500px; text-anchor: middle; fill: #8c8c8c; }
  .paper { width: 796px; margin-left: 197px; flex: 1; min-height: 0; border: 1px solid #c0c0c0; border-bottom: 0; background: #fff; box-shadow: 0 0 6px rgba(0, 0, 0, .3); overflow: hidden; }
  .jam { font-family: 'Liberation Sans', Arial, sans-serif; font-weight: 700; stroke-width: 1.800px; letter-spacing: 1.200px; word-spacing: 2px; }
  .scroll { width: 13px; flex: none; height: 571px; display: flex; flex-direction: column; align-items: center; border: 1px solid #a9a7a4; border-radius: 7px; background: #dcdbd8; }
  .up, .down { width: 11px; height: 11px; flex: none; display: flex; align-items: center; justify-content: center; background: #f7f6f5; border-radius: 7px 7px 0 0; }
  .up::before, .down::before { content: ''; border: 3px solid transparent; border-bottom-color: #aaa; border-top: 0; }
  .down { margin-top: auto; border-radius: 0 0 7px 7px; }
  .down::before { border: 3px solid transparent; border-top: 4px solid #777; border-bottom: 0; }
  .thumb { width: 13px; height: 257px; flex: none; border: 1px solid #969491; border-radius: 7px; background: linear-gradient(90deg, #fdfdfd, #deddda); display: flex; align-items: center; justify-content: center; }
  .thumb i { width: 3px; height: 7px; background: repeating-linear-gradient(#999 0 1px, transparent 1px 3px); }
  .splitter { width: 7px; flex: none; height: 571px; border-left: 1px solid #a9a7a4; border-top: 1px solid #a9a7a4; background: #f2f1f0; padding-top: 248px; }
  .splitter i { display: flex; align-items: center; justify-content: center; width: 7px; height: 73px; margin-left: -1px; background: #7c7b79; }
  .splitter i::before { content: ''; border: 4px solid transparent; border-left: 4px solid #fff; border-right: 0; }
  aside { width: 40px; flex: none; height: 571px; border: 1px solid #a9a7a4; border-width: 1px 0 1px 1px; display: flex; flex-direction: column; align-items: center; padding-top: 8px; gap: 11px; }
  aside hr { width: 23px; height: 1px; border: 0; background: #dcdbd9; margin: -5px 0 -8px; flex: none; }
  .deck { width: 32px; height: 32px; flex: none; margin-bottom: -4px; display: flex; align-items: center; justify-content: center; border: 1px solid #b9b7b4; border-radius: 4px; }
  footer { flex: none; height: 20px; display: grid; grid-template-columns: 147px 206px 163px 170px 68px 28px 30px 29px 143px 76px 143px 48px; border-top: 1px solid #fff; font-size: 11.500px; line-height: 17px; white-space: nowrap; }
  footer span { border-right: 1px solid #bbb9b6; padding-left: 8px; margin: 2px 0 0; letter-spacing: .03px; }
  footer span:first-child { padding-left: 10px; }
  footer span:last-child { border: 0; padding-left: 7px; }
  footer .mid { padding: 0; text-align: center; }
  footer .ic { padding: 3px 0 0 10px; }
  footer .views { padding-left: 11px; }
</style>
